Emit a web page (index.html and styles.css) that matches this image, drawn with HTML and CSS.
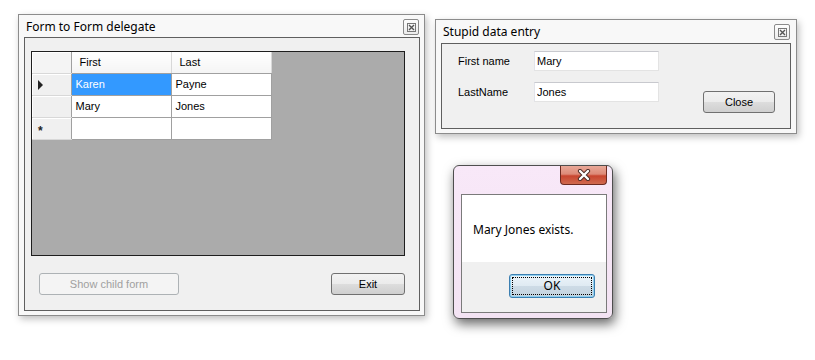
FILE: index.html
```html
<!DOCTYPE html>
<html lang="en">
<head>
    <meta charset="UTF-8">
    <title>Form to Form delegate</title>
    <link rel="stylesheet" href="styles.css">
</head>
<body>
    <div class="desktop">
        <!-- main form -->
        <div class="win main-form">
            <div class="titlebar">
                <span class="title">Form to Form delegate</span>
                <span class="sys-close">
                    <svg width="9" height="9" viewBox="0 0 9 9"><rect x="0.5" y="0.5" width="8" height="8" fill="none" stroke="#777"/><path d="M2 2 L7 7 M7 2 L2 7" stroke="#555" stroke-width="1.4"/></svg>
                </span>
            </div>
            <div class="client">
                <div class="grid">
                    <table class="grid-table">
                        <tr class="head">
                            <td class="row-head"></td>
                            <td>First</td>
                            <td>Last</td>
                        </tr>
                        <tr>
                            <td class="row-head"><span class="arrow"></span></td>
                            <td class="selected">Karen</td>
                            <td>Payne</td>
                        </tr>
                        <tr>
                            <td class="row-head"></td>
                            <td>Mary</td>
                            <td>Jones</td>
                        </tr>
                        <tr>
                            <td class="row-head"><span class="star">*</span></td>
                            <td></td>
                            <td></td>
                        </tr>
                    </table>
                </div>
                <div class="btn-row">
                    <button class="btn btn-disabled">Show child form</button>
                    <button class="btn btn-exit">Exit</button>
                </div>
            </div>
        </div>

        <!-- child form -->
        <div class="win child-form">
            <div class="titlebar tall">
                <span class="title">Stupid data entry</span>
                <span class="sys-close">
                    <svg width="9" height="9" viewBox="0 0 9 9"><rect x="0.5" y="0.5" width="8" height="8" fill="none" stroke="#777"/><path d="M2 2 L7 7 M7 2 L2 7" stroke="#555" stroke-width="1.4"/></svg>
                </span>
            </div>
            <div class="client entry">
                <div class="fields">
                    <label>First name</label>
                    <input class="textbox" type="text" value="Mary">
                    <label>LastName</label>
                    <input class="textbox" type="text" value="Jones">
                </div>
                <button class="btn btn-close">Close</button>
            </div>
        </div>

        <!-- message box -->
        <div class="msgbox">
            <div class="msg-title">
                <span class="red-close">
                    <svg width="14" height="12" viewBox="0 0 14 12"><path d="M3 2 L11 10 M11 2 L3 10" stroke="#4a2a25" stroke-width="4.2" stroke-linecap="round"/><path d="M3 2 L11 10 M11 2 L3 10" stroke="#fff" stroke-width="2.4" stroke-linecap="round"/></svg>
                </span>
            </div>
            <div class="msg-client">
                <div class="msg-body">Mary Jones exists.</div>
                <div class="msg-foot">
                    <button class="btn-ok"><span class="focus">OK</span></button>
                </div>
            </div>
        </div>
    </div>
</body>
</html>
```

FILE: styles.css
```css
* { margin: 0; padding: 0; box-sizing: border-box; }
body {
    background: #fff;
    font-family: "Liberation Sans", Arial, sans-serif;
    font-size: 11px;
    color: #000;
}
.desktop { position: relative; width: 815px; height: 360px; }

/* basic theme window */
.win {
    position: absolute;
    display: flex;
    flex-direction: column;
    background: #f8f8f8;
    border: 1px solid #8c8c8c;
    padding: 0 4px 4px 5px;
    box-shadow: 2px 3px 7px rgba(0,0,0,0.25);
}
.main-form { left: 18px; top: 14px; width: 407px; height: 302px; }
.child-form { left: 435px; top: 19px; width: 362px; height: 115px; padding-right: 5px; }

.titlebar {
    height: 22px;
    display: flex;
    align-items: flex-start;
    justify-content: space-between;
    padding-top: 4px;
}
.titlebar.tall { height: 23px; }
.title {
    font-family: "Noto Sans", "Open Sans", sans-serif;
    font-size: 12px;
    line-height: 16px;
    padding-left: 2px;
    color: #000;
}
.sys-close {
    width: 16px;
    height: 16px;
    border: 1px solid #8a8a8a;
    border-radius: 2px;
    background: linear-gradient(#fdfdfd, #ececec);
    display: flex;
    align-items: center;
    justify-content: center;
    margin-right: 1px;
}

.client {
    flex: 1;
    background: #f0f0f0;
    border: 1px solid #5f5f5f;
}
.main-form .client { padding: 13px 14px 0 6px; }

/* data grid */
.grid {
    height: 205px;
    background: #ababab;
    border: 1px solid #1e1e1e;
}
.grid-table { border-collapse: collapse; table-layout: fixed; }
.grid-table td {
    width: 100px;
    height: 22px;
    background: #fff;
    border: 1px solid #a0a0a0;
    padding: 0 4px;
    white-space: nowrap;
}
.grid-table tr:first-child td { border-top: none; }
.grid-table td:first-child { border-left: none; }
.grid-table .head td {
    height: 21px;
    background: linear-gradient(#ffffff, #f4f4f4);
    border-color: #d8d8d8;
    border-bottom-color: #a0a0a0;
    padding-left: 8px;
}
.grid-table td.row-head {
    width: 39px;
    background: #f0f0f0;
    border-color: #d8d8d8;
    border-right-color: #a0a0a0;
    box-shadow: inset 1px 1px 0 #fff;
    padding-left: 5px;
}
.grid-table .head td.row-head { background: #f4f4f4; }
.grid-table td.selected { background: #3399ff; color: #fff; }
.arrow {
    display: inline-block;
    width: 0; height: 0;
    border-top: 5px solid transparent;
    border-bottom: 5px solid transparent;
    border-left: 5px solid #222;
    vertical-align: middle;
    margin-left: 1px;
}
.star {
    font-size: 12px;
    font-weight: bold;
    color: #222;
    position: relative;
    top: 3px;
    margin-left: 1px;
}

.btn-row {
    display: flex;
    justify-content: space-between;
    margin-top: 17px;
    padding-left: 8px;
}
.btn {
    height: 22px;
    font-family: "Liberation Sans", Arial, sans-serif;
    font-size: 11px;
    border: 1px solid #707070;
    border-radius: 3px;
    background: linear-gradient(#f2f2f2 0%, #ebebeb 50%, #dddddd 51%, #cfcfcf 100%);
    color: #000;
}
.btn-disabled {
    width: 140px;
    color: #a0a0a0;
    border-color: #adb2b5;
    background: #f4f4f4;
}
.btn-exit { width: 74px; }

/* child form */
.entry {
    display: flex;
    align-items: flex-start;
    padding: 7px 0 0 16px;
}
.fields {
    display: grid;
    grid-template-columns: 76px 125px;
    row-gap: 11px;
    align-items: center;
}
.textbox {
    height: 20px;
    border: 1px solid #e3e3e3;
    border-top-color: #c8c9ce;
    border-left-color: #e2e3ea;
    background: #fff;
    font-family: "Liberation Sans", Arial, sans-serif;
    font-size: 11px;
    padding: 0 2px;
    outline: none;
}
.btn-close { width: 72px; margin: 40px 0 0 44px; }

/* message box */
.msgbox {
    position: absolute;
    left: 453px;
    top: 165px;
    width: 160px;
    height: 154px;
    border: 1px solid #4e4e4e;
    border-radius: 6px;
    background: linear-gradient(#f8e8f8, #f3e3f3);
    padding: 0 5px 5px 7px;
    display: flex;
    flex-direction: column;
    box-shadow: 2px 5px 12px rgba(0,0,0,0.6);
}
.msg-title {
    height: 28px;
    display: flex;
    justify-content: flex-end;
}
.red-close {
    width: 47px;
    height: 19px;
    border: 1px solid #6d2a20;
    border-top: none;
    border-radius: 0 0 4px 4px;
    background: linear-gradient(#e9a898 0%, #dd8a78 45%, #c8452f 55%, #d06a4f 100%);
    display: flex;
    align-items: center;
    justify-content: center;
}
.msg-client {
    flex: 1;
    border: 1px solid #7a7a7a;
    display: flex;
    flex-direction: column;
}
.msg-body {
    height: 67px;
    background: #fff;
    font-family: "Noto Sans", "Open Sans", sans-serif;
    font-size: 12px;
    padding: 26px 0 0 11px;
}
.msg-foot {
    flex: 1;
    background: #f0f0f0;
    padding: 12px 0 0 47px;
}
.btn-ok {
    width: 86px;
    height: 24px;
    border: 1px solid #3c7fb1;
    border-radius: 3px;
    background: linear-gradient(#ecf4fa 0%, #dfeaf2 50%, #cddbe6 51%, #c4d3de 100%);
    box-shadow: inset 0 0 0 1px #8fd0f0;
    padding: 2px;
    font-family: "Noto Sans", "Open Sans", sans-serif;
    font-size: 12px;
}
.focus {
    display: block;
    height: 100%;
    border: 1px dotted #000;
    line-height: 16px;
}
```
